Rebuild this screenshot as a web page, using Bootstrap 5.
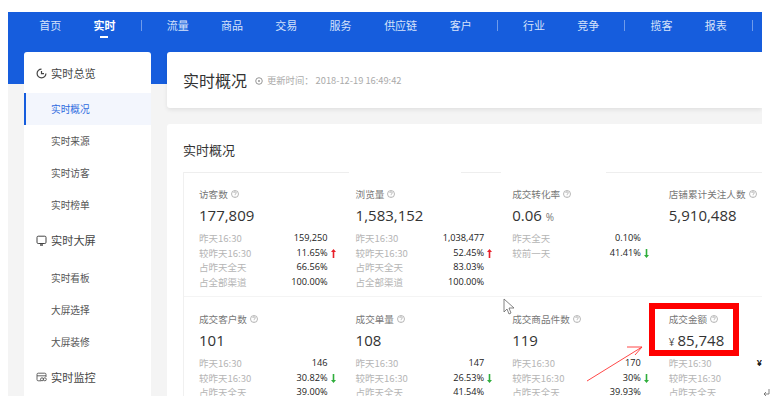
<!DOCTYPE html>
<html lang="zh">
<head>
<meta charset="utf-8">
<link href="https://cdn.jsdelivr.net/npm/bootstrap@5.3.0/dist/css/bootstrap.min.css" rel="stylesheet">
<style>
html,body{height:100%;overflow:hidden;background:#fff}
body{position:relative;font-family:"Noto Sans CJK SC","Liberation Sans",sans-serif;padding:12px 8px 16px}
.frame{position:relative;width:754px;height:384px;overflow:hidden;background:linear-gradient(#165ddd 72px,#f4f4f4 72px)}
.topnav{height:40px;padding-left:15px;align-items:flex-start}
.topnav .nav-link{color:#d5e2fa;font-size:11px;line-height:16px;padding:5px 0 0;width:54.4px;text-align:center;position:relative;height:28px}
.topnav .nav-link.wide{width:66px}
.topnav .nav-link.active{color:#fff;font-weight:700}
.topnav .nav-link.active::after{content:"";position:absolute;left:23px;top:24px;width:8px;height:2px;background:#fff}
.topsep{width:1px;height:11px;background:#6f9bea;margin:8px 9px 0}
.body-row{gap:16px;padding-left:16px}
.side{width:127px;flex:none;height:344px;background:#fff;border-radius:3px 3px 0 0}
.side-head{height:42px;padding-left:12px;font-size:11.2px;color:#444;gap:4px}
.side-head.later{height:38px}
.side-head.gapb{margin-bottom:3px}
.side-item{height:32px;line-height:32px;padding-left:27px;font-size:9.7px;color:#555}
.side-item.on{background:#f3f6fd;color:#2f6be0;border-left:2px solid #165ddd;padding-left:25px;margin-top:-1px}
.main{flex:1;min-width:0}
.titlecard{height:56px;background:#fff;border-radius:3px 0 0 3px;padding:2px 0 0 16px;margin-bottom:16px;box-shadow:0 2px 4px rgba(0,0,0,.08)}
.titlecard h1{font-size:16px;font-weight:400;color:#333;margin:0 8px 0 0}
.upd{font-size:9.3px;color:#aaa;gap:4px}
.datacard{background:#fff;height:272px;padding:0 0 0 16px;border-radius:3px 0 0 0}
.datacard h2{font-size:13px;font-weight:400;color:#333;line-height:52px;height:48px;margin:0}
.tbl{display:grid;grid-template-columns:156.6px 156.6px 156.6px 1fr;grid-template-rows:125px 1fr;border-left:1px solid #f0f0f0;height:224px;background:linear-gradient(90deg,#eee 165px,transparent 165px,transparent 277px,#eee 277px,#eee 317px,transparent 317px,transparent 422px,#eee 422px) top left/100% 1px no-repeat}
.cellx{padding:14px 0 0 15px;position:relative}
.cellx.rowa{border-bottom:1px solid #f4f4f4}
.lab{font-size:9.6px;line-height:16px;color:#777;display:flex;align-items:center;gap:3px;white-space:nowrap}
.num{font-family:"Open Sans",sans-serif;font-size:15px;line-height:24px;color:#333;margin-top:1px;height:28px}
.num small{font-size:10px;color:#777}
.yen{font-size:10px;color:#444;margin-right:3px}
.rw{display:flex;font-size:9.5px;line-height:14.5px;color:#b5b5b5;padding-right:13px;white-space:nowrap}
.cellx:nth-child(4n) .rw{padding-right:0}
.rw b{margin-left:auto;font-weight:400;color:#222;font-family:"Open Sans",sans-serif;font-size:9.2px;position:relative}
.rw b.strong{font-weight:700}
.rw b i{position:absolute;left:100%;top:3px;margin-left:3px;display:block;line-height:0}
.ann{position:absolute;pointer-events:none}
.redbox{left:641px;top:291px;width:90px;height:53px;border:6px solid #f00}
</style>
</head>
<body>
<div class="frame">
  <nav class="nav topnav flex-nowrap">
    <a class="nav-link">首页</a><a class="nav-link active">实时</a><span class="topsep"></span>
    <a class="nav-link">流量</a><a class="nav-link">商品</a><a class="nav-link">交易</a><a class="nav-link">服务</a><a class="nav-link wide">供应链</a><a class="nav-link">客户</a><span class="topsep"></span>
    <a class="nav-link">行业</a><a class="nav-link">竞争</a><span class="topsep"></span>
    <a class="nav-link">揽客</a><a class="nav-link">报表</a><span class="topsep"></span>
  </nav>
  <div class="d-flex body-row">
    <aside class="side">
      <div class="side-head d-flex align-items-center"><svg width="11" height="11" viewBox="0 0 11 11" fill="none" stroke="#444" stroke-width="1.2"><path d="M9.9 5.5A4.4 4.4 0 1 1 5.5 1.1"/><path d="M5.5 3v2.6h2.5"/></svg>实时总览</div>
      <div class="side-item on">实时概况</div>
      <div class="side-item">实时来源</div>
      <div class="side-item">实时访客</div>
      <div class="side-item">实时榜单</div>
      <div class="side-head later gapb d-flex align-items-center"><svg width="11" height="11" viewBox="0 0 11 11" fill="none" stroke="#444" stroke-width="1"><rect x="1" y="1.2" width="9" height="7.3" rx="1.2"/><path d="M4 10h3" stroke-width="1.4"/></svg>实时大屏</div>
      <div class="side-item">实时看板</div>
      <div class="side-item">大屏选择</div>
      <div class="side-item">大屏装修</div>
      <div class="side-head later d-flex align-items-center"><svg width="11" height="11" viewBox="0 0 11 11" fill="none" stroke="#555" stroke-width=".9"><path d="M5 8.8H2.2A1.2 1.2 0 0 1 1 7.6V2.4a1.2 1.2 0 0 1 1.2-1.2h6.6A1.2 1.2 0 0 1 10 2.4V5"/><path d="M1 3.8h9"/><circle cx="6" cy="7.3" r="1.5"/><circle cx="8.8" cy="7.3" r="1.5"/></svg>实时监控</div>
    </aside>
    <main class="main">
      <section class="titlecard d-flex align-items-center">
        <h1>实时概况</h1>
        <span class="upd d-flex align-items-center"><svg width="8" height="8" viewBox="0 0 9 9" fill="none" stroke="#888"><circle cx="4.5" cy="4.5" r="3.7"/><circle cx="4.5" cy="4.5" r="1" fill="#888" stroke="none"/></svg>更新时间： 2018-12-19 16:49:42</span>
      </section>
      <section class="datacard">
        <h2>实时概况</h2>
        <div class="tbl">
          <div class="cellx rowa">
            <div class="lab">访客数 <svg class="qm" width="8" height="8"></svg></div>
            <div class="num">177,809</div>
            <div class="rw">昨天16:30<b>159,250</b></div>
            <div class="rw">较昨天16:30<b>11.65%<i><svg width="5" height="9" viewBox="0 0 5 9"><path d="M2.5 0 5 3H3.3v6H1.7V3H0z" fill="#e8202a"/></svg></i></b></div>
            <div class="rw">占昨天全天<b>66.56%</b></div>
            <div class="rw">占全部渠道<b>100.00%</b></div>
          </div>
          <div class="cellx rowa">
            <div class="lab">浏览量 <svg class="qm" width="8" height="8"></svg></div>
            <div class="num">1,583,152</div>
            <div class="rw">昨天16:30<b>1,038,477</b></div>
            <div class="rw">较昨天16:30<b>52.45%<i><svg width="5" height="9" viewBox="0 0 5 9"><path d="M2.5 0 5 3H3.3v6H1.7V3H0z" fill="#e8202a"/></svg></i></b></div>
            <div class="rw">占昨天全天<b>83.03%</b></div>
            <div class="rw">占全部渠道<b>100.00%</b></div>
          </div>
          <div class="cellx rowa">
            <div class="lab">成交转化率 <svg class="qm" width="8" height="8"></svg></div>
            <div class="num">0.06 <small>%</small></div>
            <div class="rw">昨天全天<b>0.10%</b></div>
            <div class="rw">较前一天<b>41.41%<i><svg width="5" height="9" viewBox="0 0 5 9"><path d="M2.5 9 5 6H3.3V0H1.7v6H0z" fill="#2fae3c"/></svg></i></b></div>
          </div>
          <div class="cellx rowa">
            <div class="lab">店铺累计关注人数 <svg class="qm" width="8" height="8"></svg></div>
            <div class="num">5,910,488</div>
          </div>
          <div class="cellx">
            <div class="lab">成交客户数 <svg class="qm" width="8" height="8"></svg></div>
            <div class="num">101</div>
            <div class="rw">昨天16:30<b>146</b></div>
            <div class="rw">较昨天16:30<b>30.82%<i><svg width="5" height="9" viewBox="0 0 5 9"><path d="M2.5 9 5 6H3.3V0H1.7v6H0z" fill="#2fae3c"/></svg></i></b></div>
            <div class="rw">占昨天全天<b>39.00%</b></div>
          </div>
          <div class="cellx">
            <div class="lab">成交单量 <svg class="qm" width="8" height="8"></svg></div>
            <div class="num">108</div>
            <div class="rw">昨天16:30<b>147</b></div>
            <div class="rw">较昨天16:30<b>26.53%<i><svg width="5" height="9" viewBox="0 0 5 9"><path d="M2.5 9 5 6H3.3V0H1.7v6H0z" fill="#2fae3c"/></svg></i></b></div>
            <div class="rw">占昨天全天<b>41.54%</b></div>
          </div>
          <div class="cellx">
            <div class="lab">成交商品件数 <svg class="qm" width="8" height="8"></svg></div>
            <div class="num">119</div>
            <div class="rw">昨天16:30<b>170</b></div>
            <div class="rw">较昨天16:30<b>30%<i><svg width="5" height="9" viewBox="0 0 5 9"><path d="M2.5 9 5 6H3.3V0H1.7v6H0z" fill="#2fae3c"/></svg></i></b></div>
            <div class="rw">占昨天全天<b>39.93%</b></div>
          </div>
          <div class="cellx">
            <div class="lab">成交金额 <svg class="qm" width="8" height="8"></svg></div>
            <div class="num"><span class="yen">¥</span>85,748</div>
            <div class="rw">昨天16:30<b class="strong">¥</b></div>
            <div class="rw">较昨天16:30</div>
            <div class="rw">占昨天全天</div>
          </div>
        </div>
      </section>
    </main>
  </div>
  <div class="ann redbox"></div>
  <svg class="ann" style="left:570px;top:325px" width="100" height="50" viewBox="0 0 100 50" fill="none" stroke="#f33" stroke-width=".9"><path d="M9 44 64 10M49 10h15l-7 8"/></svg>
  <svg class="ann" style="left:495px;top:286px" width="14" height="18" viewBox="0 0 14 18" fill="#fff" stroke="#666" stroke-width=".8"><path d="M1 1v13l3-3 2 5 2-1-2-5h5z"/></svg>
</div>
<svg class="ann" style="left:763px;top:388px" width="7" height="9" viewBox="0 0 7 9" fill="none" stroke="#666" stroke-width=".8"><path d="M6 1v5H1M3 4 1 6l2 2"/></svg>
<script>
document.querySelectorAll('.qm').forEach(function(s){s.setAttribute('viewBox','0 0 8 8');s.innerHTML='<circle cx="4" cy="4" r="3.5" fill="none" stroke="#999" stroke-width=".7"/><path d="M2.8 3a1.2 1.2 0 1 1 1.6 1.1c-.3.2-.4.3-.4.8" fill="none" stroke="#999" stroke-width=".7"/><circle cx="4" cy="6.1" r=".45" fill="#999"/>';});
</script>
<script src="https://cdn.jsdelivr.net/npm/bootstrap@5.3.0/dist/js/bootstrap.bundle.min.js"></script>
</body>
</html>
